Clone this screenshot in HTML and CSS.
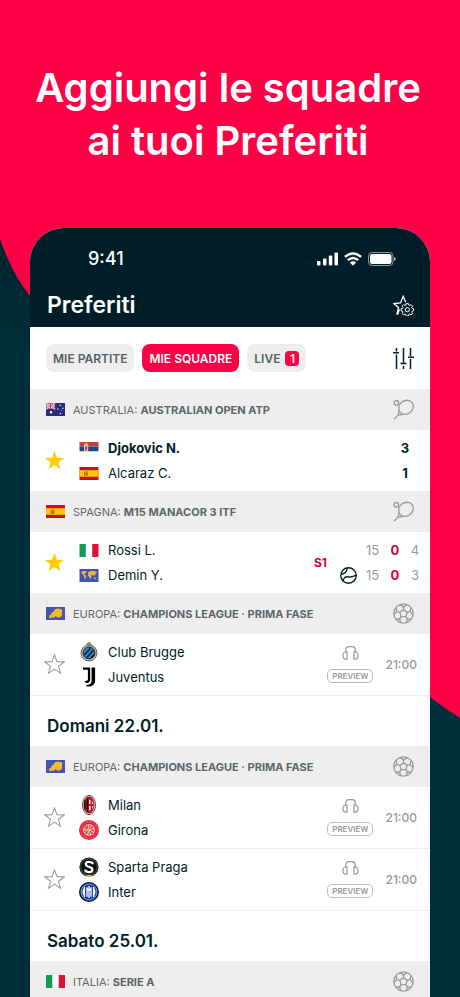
FILE: index.html
```html
<!DOCTYPE html>
<html lang="it">
<head>
  <meta charset="UTF-8">
  <meta name="viewport" content="width=device-width, initial-scale=1">
  <title>Preferiti</title>
  <link rel="stylesheet" href="styles.css">
</head>
<body>

  <!-- Icone condivise -->
  <svg class="sprite" aria-hidden="true">
    <symbol id="star" viewBox="0 0 20 20">
      <path d="M10 .8l2.3 6.5 6.9.2-5.4 4.2 1.9 6.7L10 14.4l-5.700 4 1.900-6.700L.8 7.500l6.900-.2z"/>
    </symbol>
    <symbol id="tennis" viewBox="0 0 21 21">
      <g fill="none" stroke="#999" stroke-width="1.300">
        <circle cx="3.300" cy="3.800" r="2.300"/>
        <ellipse cx="13" cy="8.300" rx="7.700" ry="6.600" transform="rotate(-38 13 8.300)"/>
        <path d="M6.300 11.300L5 16.100l4.800-.6M5 16.100L1 20.200"/>
      </g>
    </symbol>
    <symbol id="soccer" viewBox="0 0 21 21">
      <g fill="none" stroke="#999" stroke-width="1.300" stroke-linejoin="round">
        <circle cx="10.500" cy="10.500" r="9.700"/>
        <path d="M10.500 6.700l3.700 2.700-1.400 4.300H8.200L6.800 9.400z"/>
        <path d="M10.500 6.700V3.900M14.200 9.400l2.700-.9M12.800 13.700l1.700 2.300M8.200 13.700L6.500 16M6.800 9.400l-2.700-.9"/>
        <path d="M7 1.600l3.500 2.300L14 1.600M16.900 8.500L18 4.500M16.900 8.500l3.100 2.700M14.500 16l4.200.2M14.500 16l-1.500 4M6.500 16l-4.200.2M6.500 16L8 20M4.100 8.500L3 4.500M4.100 8.500L1 11.200"/>
      </g>
    </symbol>
    <symbol id="headphones" viewBox="0 0 17 14">
      <g fill="none" stroke="#999" stroke-width="1.200">
        <path d="M3.700 6.500V4.200Q3.700.7 7 .7h3q3.300 0 3.300 3.500v2.300"/>
        <path d="M5 5.800v7.400H4C2 13.200.9 11.700.9 9.600S2 6.100 4 6zM12 5.800v7.400h1c2 0 3.100-1.500 3.100-3.600S15 6.100 13 6z"/>
      </g>
    </symbol>

    <!-- Bandiere -->
    <symbol id="flag-au" viewBox="0 0 19 13">
      <path fill="#292b7c" d="M0 0h19v13H0z"/>
      <path stroke="#fff" stroke-width="1.600" d="M0 0l9 6M9 0L0 6"/>
      <path stroke="#e8475e" stroke-width=".7" d="M0 0l9 6M9 0L0 6"/>
      <path stroke="#fff" stroke-width="2" d="M4.500 0v6M0 3h9"/>
      <path stroke="#e0304b" stroke-width="1.200" d="M4.500 0v6M0 3h9"/>
      <g fill="#fff"><circle cx="5" cy="9.300" r="1.200"/><circle cx="14.300" cy="2.300" r=".7"/><circle cx="11.900" cy="6" r=".7"/><circle cx="16.800" cy="5.200" r=".7"/><circle cx="14.400" cy="10.500" r=".8"/><circle cx="15.500" cy="7.200" r=".4"/></g>
    </symbol>
    <symbol id="flag-rs" viewBox="0 0 19 13">
      <path fill="#fff" d="M0 0h19v13H0z"/>
      <path fill="#c93b45" d="M0 0h19v4.400H0z"/>
      <path fill="#1d4a86" d="M0 4.400h19v4.800H0z"/>
      <path fill="#f0d4c8" d="M4.500 2.500h4.200v5.200q0 1.800-2.100 2.600-2.100-.8-2.100-2.600z"/>
      <path fill="#d4353f" d="M5.500 4.200h2.200v3.500l-1.100 1.400-1.100-1.400z"/>
      <path fill="#edb94a" d="M5.300 1h2.600v1.700H5.300z"/>
    </symbol>
    <symbol id="flag-es" viewBox="0 0 19 13">
      <path fill="#c9101d" d="M0 0h19v13H0z"/>
      <path fill="#ffc900" d="M0 3.200h19v6.600H0z"/>
      <path fill="#bd5a1d" d="M4.600 4.600h1V9h-1zM6 5.400h2.400v2.800q-1.200 1.100-2.400 0zM6.300 4.200h1.800v.9H6.300z"/>
    </symbol>
    <symbol id="flag-it" viewBox="0 0 19 13">
      <path fill="#fff" d="M0 0h19v13H0z"/>
      <path fill="#139a50" d="M0 0h6.300v13H0z"/>
      <path fill="#dc1236" d="M12.700 0H19v13h-6.300z"/>
    </symbol>
    <symbol id="flag-world" viewBox="0 0 19 13">
      <path fill="#4252b5" d="M0 0h19v13H0z"/>
      <path fill="#e9b93b" d="M1.800 3l2-.9 3.700.3-1.200 1.500-1 .5-.3 1.300 2 1.300-.6 1.600-1 2.200-.7-2.600-.3-1.500-1.300-1.200L2 4zM8.500 3.500l1.700-1.300 3.200-.5 4 1-.4 1.500-1.200.5-.5 1.900-1-.6-.8 1-.9-1.500-.7.6.2 1.400-1.300 2.900-1.100-2.500L8.300 6.500l.4-1.200zM14.300 8.300l2 .4.200 1.500-1.900-.3z"/>
    </symbol>
    <symbol id="flag-europe" viewBox="0 0 19 13">
      <path fill="#4252b5" d="M0 0h19v13H0z"/>
      <path fill="#f3bd27" d="M3 10.700l.5-2.500 2-.8-.4-1.200 2.200-1.400 1.600-2.500 3.400-.7 4.200 1.200-.6 3 .4 1.600-1.300 2.500-2.200.3-.7 1-1.300-1.400-1.600-.5-1.500 1.800-2-.8-1 1z"/>
    </symbol>

    <!-- Stemmi -->
    <symbol id="logo-brugge" viewBox="0 0 20 20">
      <circle cx="10" cy="2.500" r="2" fill="#a89b87" stroke="#5c574f" stroke-width=".6"/>
      <circle cx="10" cy="10.900" r="8" fill="#c4b79e" stroke="#4a4a48" stroke-width=".8"/>
      <circle cx="10" cy="10.900" r="5.900" fill="#2f86d0" stroke="#151b24"/>
      <path stroke="#0c141d" stroke-width="1.400" d="M5.500 12.800l6-6.500M8 15.300l6.300-7M12 16l3.300-3.600"/>
    </symbol>
    <symbol id="logo-juventus" viewBox="0 0 20 20">
      <path d="M4 .5h7.200v12.300c0 2-1.500 3.300-4 3.500l-1.700-2.400c2.400.2 3.400-.2 3.400-1.600V2.800H4z"/>
      <path d="M12.600.5h3.500v12.700c0 4-2.700 6.300-6.700 6.300H7.700l-.6-1.600c4 .1 5.500-1.400 5.500-4.900z"/>
    </symbol>
    <symbol id="logo-milan" viewBox="0 0 20 20">
      <ellipse cx="10" cy="10" rx="6.500" ry="9.700" fill="#edd9cf" stroke="#3b1c1c" stroke-width=".8"/>
      <ellipse cx="10" cy="10" rx="5.400" ry="8.400" fill="#a81722"/>
      <path stroke="#170b0d" stroke-width="1.300" d="M6 5.500v9M8.500 3v14"/>
      <path fill="#fff" d="M10 4.500c3 .5 4.600 2.500 4.600 5.500s-1.600 5-4.600 5.500z"/>
      <path stroke="#c41c2a" stroke-width="1.800" d="M12.400 3.500v13M10 10h5"/>
    </symbol>
    <symbol id="logo-girona" viewBox="0 0 20 20">
      <circle cx="10" cy="10" r="10" fill="#e8203f"/>
      <circle cx="10" cy="10" r="8.200" fill="none" stroke="#f28a94" stroke-width=".9" stroke-dasharray="1 .9"/>
      <circle cx="10" cy="10" r="6" fill="#f6d6c6"/>
      <circle cx="10" cy="10" r="3.800" fill="none" stroke="#e25b51" stroke-width="3" stroke-dasharray="1.500 1"/>
      <path stroke="#e44654" stroke-width="1.200" d="M6 6l8 8M14 6l-8 8"/>
      <circle cx="10" cy="10" r="1.600" fill="#f5bd57"/>
    </symbol>
    <symbol id="logo-sparta" viewBox="0 0 20 20">
      <circle cx="10" cy="10" r="9.600" fill="#101010"/>
      <circle cx="10" cy="10" r="8.300" fill="none" stroke="#77736c" stroke-width=".7"/>
      <path fill="none" stroke="#fff" stroke-width="2.300" d="M13.500 7.200V6q-1-1.200-3.500-1.200-3.200 0-3.200 2.300 0 2 3.200 2.700 3.400.8 3.400 2.900 0 2.400-3.400 2.400-2.400 0-3.500-1.400v-1.300"/>
      <path fill="#2a63a5" d="M3.500 17l3.400.8v1.500q-2-.5-3.400-2.300z"/>
      <path fill="#efbd36" d="M7.500 18h5v1.700h-5z"/>
      <path fill="#cf3338" d="M13.100 17.800l3.400-.8q-1.400 1.800-3.400 2.300z"/>
    </symbol>
    <symbol id="logo-inter" viewBox="0 0 20 20">
      <circle cx="10" cy="10" r="10" fill="#05183a"/>
      <circle cx="10" cy="10" r="8" fill="#173fc4" stroke="#dce7fa" stroke-width=".6"/>
      <path fill="none" stroke="#fff" stroke-width="1.300" d="M5.400 5v10M8 5.200v9.500M12 5.200v9.500M14.600 5v10M10 4v12M8 6l2 3 2-3M5.400 6.500q-2.500 3.500 0 7M14.600 6.500q2.500 3.500 0 7"/>
    </symbol>
  </svg>

  <!-- Sfondo -->
  <svg class="backdrop" viewBox="0 0 460 997" preserveAspectRatio="none" aria-hidden="true">
    <path fill="#ff0046" d="M0 0h460v718q-15-9-30-21L30 296Q12 274 0 239z"/>
  </svg>

  <h1 class="headline">Aggiungi le squadre<br>ai tuoi Preferiti</h1>

  <main class="phone">
    <header class="phone-header">
      <div class="status-bar">
        <span class="clock">9:41</span>
        <svg class="signal" width="22" height="14" viewBox="0 0 22 14" fill="#fff">
          <rect x="0" y="9" width="3.500" height="4.500" rx="1"/>
          <rect x="6" y="6.500" width="3.500" height="7" rx="1"/>
          <rect x="11.800" y="3.500" width="3.500" height="10" rx="1"/>
          <rect x="17.500" y="0.500" width="3.500" height="13" rx="1"/>
        </svg>
        <svg class="wifi" width="18" height="14" viewBox="0 0 18 14" fill="none" stroke="#fff" stroke-width="2.400">
          <path d="M.9 4.900q8.100-7 16.200 0M3.800 8.200q5.200-4.400 10.400 0"/>
          <path fill="#fff" stroke="none" d="M5.900 10.500q3.100-2.300 6.200 0L9 13.700z"/>
        </svg>
        <svg class="battery" width="28" height="14" viewBox="0 0 28 14">
          <rect x=".5" y=".5" width="24.500" height="13" rx="3.500" fill="none" stroke="#8b989c"/>
          <rect x="2" y="2" width="21.500" height="10" rx="2" fill="#fff"/>
          <path d="M26 5q1.700.5 1.700 2T26 9z" fill="#b3bcbe"/>
        </svg>
      </div>
      <div class="title-bar">
        <h2>Preferiti</h2>
        <button class="icon-button" aria-label="Gestisci preferiti">
          <svg width="21" height="21" viewBox="0 0 21 21" fill="none" stroke="#fff" stroke-width="1.300">
            <path d="M6.700 14.500L3.900 19.500 5.500 12.500.8 8.500l6.700-.6L10.200 1.300l2.500 6"/>
            <path d="M5.700 17.800l-1.800 1.700"/>
            <path stroke-width="1" d="M13.200 8.600h2.200l.3 1.400 1 .4 1.300-.8 1.500 1.500-.8 1.300.4 1 1.400.3v2.200l-1.400.3-.4 1 .8 1.300-1.500 1.400-1.300-.8-1 .4-.3 1.400h-2.200l-.3-1.400-1-.4-1.300.8-1.500-1.400.8-1.300-.4-1-1.400-.3v-2.200l1.400-.3.4-1-.8-1.300 1.500-1.500 1.300.8 1-.4z"/>
            <circle cx="14.300" cy="14.700" r="2.100" stroke-width="1"/>
          </svg>
        </button>
      </div>
    </header>

    <nav class="tabs">
      <button class="tab">MIE PARTITE</button>
      <button class="tab active">MIE SQUADRE</button>
      <button class="tab">LIVE <span class="badge">1</span></button>
      <button class="icon-button filter" aria-label="Filtri">
        <svg width="21" height="21" viewBox="0 0 21 21" fill="none" stroke="#001e28" stroke-width="1.500">
          <path d="M3.500 0v3.500M3.500 6.500V21M0 4.700h6M10.500 0v15M10.500 18v3M7.500 15.500h6M17.500 0v8M17.500 11v10M15 9.300h6"/>
        </svg>
      </button>
    </nav>

    <section>
      <h3 class="league">
        <svg class="flag"><use href="#flag-au"/></svg>
        <span>AUSTRALIA: <b>AUSTRALIAN OPEN ATP</b></span>
        <svg class="sport"><use href="#tennis"/></svg>
      </h3>
      <div class="match">
        <button class="star on" aria-label="Rimuovi dai preferiti"><svg><use href="#star"/></svg></button>
        <div class="teams">
          <div class="team winner"><svg class="flag"><use href="#flag-rs"/></svg>Djokovic N.</div>
          <div class="team"><svg class="flag"><use href="#flag-es"/></svg>Alcaraz C.</div>
        </div>
        <div class="result"><span>3</span><span>1</span></div>
      </div>
    </section>

    <section>
      <h3 class="league">
        <svg class="flag"><use href="#flag-es"/></svg>
        <span>SPAGNA: <b>M15 MANACOR 3 ITF</b></span>
        <svg class="sport"><use href="#tennis"/></svg>
      </h3>
      <div class="match">
        <button class="star on" aria-label="Rimuovi dai preferiti"><svg><use href="#star"/></svg></button>
        <div class="teams">
          <div class="team"><svg class="flag"><use href="#flag-it"/></svg>Rossi L.</div>
          <div class="team"><svg class="flag"><use href="#flag-world"/></svg>Demin Y.</div>
        </div>
        <span class="stage">S1</span>
        <div class="sets">
          <span></span><span>15</span><span class="live">0</span><span>4</span>
          <svg width="17" height="17" viewBox="0 0 17 17" fill="none" stroke="#001e28" stroke-width="1.400">
            <circle cx="8.500" cy="8.500" r="7.700"/>
            <path d="M1.200 6.900C4.500 7.300 7 5 7.200 1M3.200 14C3.400 10.800 5.500 9.300 8.500 9.900s4.500-.3 7.600-1.700"/>
          </svg>
          <span>15</span><span class="live">0</span><span>3</span>
        </div>
      </div>
    </section>

    <section>
      <h3 class="league">
        <svg class="flag"><use href="#flag-europe"/></svg>
        <span>EUROPA: <b>CHAMPIONS LEAGUE · PRIMA FASE</b></span>
        <svg class="sport"><use href="#soccer"/></svg>
      </h3>
      <div class="match upcoming">
        <button class="star" aria-label="Aggiungi ai preferiti"><svg><use href="#star"/></svg></button>
        <div class="teams">
          <div class="team"><svg class="logo"><use href="#logo-brugge"/></svg>Club Brugge</div>
          <div class="team"><svg class="logo"><use href="#logo-juventus"/></svg>Juventus</div>
        </div>
        <div class="extras">
          <svg class="audio"><use href="#headphones"/></svg>
          <span class="preview">PREVIEW</span>
        </div>
        <time>21:00</time>
      </div>
    </section>

    <h2 class="day">Domani 22.01.</h2>
    <section>
      <h3 class="league">
        <svg class="flag"><use href="#flag-europe"/></svg>
        <span>EUROPA: <b>CHAMPIONS LEAGUE · PRIMA FASE</b></span>
        <svg class="sport"><use href="#soccer"/></svg>
      </h3>
      <div class="match upcoming">
        <button class="star" aria-label="Aggiungi ai preferiti"><svg><use href="#star"/></svg></button>
        <div class="teams">
          <div class="team"><svg class="logo"><use href="#logo-milan"/></svg>Milan</div>
          <div class="team"><svg class="logo"><use href="#logo-girona"/></svg>Girona</div>
        </div>
        <div class="extras">
          <svg class="audio"><use href="#headphones"/></svg>
          <span class="preview">PREVIEW</span>
        </div>
        <time>21:00</time>
      </div>
      <div class="match upcoming">
        <button class="star" aria-label="Aggiungi ai preferiti"><svg><use href="#star"/></svg></button>
        <div class="teams">
          <div class="team"><svg class="logo"><use href="#logo-sparta"/></svg>Sparta Praga</div>
          <div class="team"><svg class="logo"><use href="#logo-inter"/></svg>Inter</div>
        </div>
        <div class="extras">
          <svg class="audio"><use href="#headphones"/></svg>
          <span class="preview">PREVIEW</span>
        </div>
        <time>21:00</time>
      </div>
    </section>

    <h2 class="day">Sabato 25.01.</h2>
    <section>
      <h3 class="league">
        <svg class="flag"><use href="#flag-it"/></svg>
        <span>ITALIA: <b>SERIE A</b></span>
        <svg class="sport"><use href="#soccer"/></svg>
      </h3>
    </section>
  </main>

</body>
</html>
```

FILE: styles.css
```css
* {
  box-sizing: border-box;
}

body {
  margin: 0;
  height: 100vh;
  overflow: hidden;
  position: relative;
  background: linear-gradient(#002029 20%, #002f3c 36%);
  font-family: Inter, "Liberation Sans", sans-serif;
  color: #001e28;
}

h1, h2, h3 {
  margin: 0;
}

button {
  border: none;
  padding: 0;
  font-family: inherit;
  cursor: pointer;
}

svg {
  display: block;
  flex: none;
}

.sprite {
  position: absolute;
  width: 0;
  height: 0;
}

.backdrop {
  position: absolute;
  top: 0;
  left: 0;
  width: 100%;
  height: 100%;
  z-index: -1;
}

.headline {
  padding: 61px 4px 61px 0;
  color: #fff;
  font-size: 40px;
  font-weight: 600;
  line-height: 53px;
  text-align: center;
  white-space: nowrap;
}

/* Telefono */
.phone {
  margin: 0 30px;
  background: #fff;
  border-radius: 34px 34px 0 0;
  overflow: hidden;
}

.phone-header {
  background: #001e28;
  color: #fff;
}

.status-bar {
  display: flex;
  align-items: center;
  padding: 20px 34px 0 58px;
}

.clock {
  flex: 1;
  font-size: 18px;
  font-weight: 500;
  line-height: 22px;
}

.wifi {
  margin: 0 6px 0 5px;
}

.title-bar {
  display: flex;
  align-items: center;
  justify-content: space-between;
  padding: 20px 16px 7px 17px;
}

.title-bar h2 {
  font-size: 23px;
  font-weight: 600;
  line-height: 30px;
}

.icon-button {
  background: none;
}

/* Schede */
.tabs {
  display: flex;
  align-items: center;
  gap: 8px;
  padding: 17px 16px;
}

.tab {
  display: flex;
  align-items: center;
  gap: 5px;
  height: 28px;
  padding: 0 7px;
  border-radius: 8px;
  background: #eee;
  color: #555e61;
  font-size: 12px;
  font-weight: 600;
}

.tab.active {
  background: #ff0046;
  color: #fff;
}

.badge {
  width: 14px;
  border-radius: 4px;
  background: #ff0046;
  color: #fff;
  line-height: 15px;
}

.filter {
  margin-left: auto;
}

/* Campionato */
.league {
  display: flex;
  align-items: center;
  gap: 8px;
  height: 41px;
  padding: 0 16px;
  background: #eee;
  color: #666;
  font-size: 11px;
  font-weight: 400;
}

.league b {
  font-weight: 700;
  color: #5c6568;
}

.flag {
  width: 19px;
  height: 13px;
}

.sport {
  width: 21px;
  height: 21px;
  margin-left: auto;
}

/* Partita */
.match {
  display: flex;
  align-items: center;
  height: 61px;
  padding-left: 14px;
}

.upcoming {
  height: 62px;
  border-bottom: 1px solid #eee;
  padding-right: 13px;
}

.star {
  width: 21px;
  height: 21px;
  background: none;
}

.star svg {
  width: 21px;
  height: 21px;
  fill: none;
  stroke: #999;
}

.star.on svg {
  fill: #ffcd00;
  stroke: none;
}

.teams {
  flex: 1;
  padding-left: 14px;
}

.team {
  display: flex;
  align-items: center;
  gap: 9px;
  font-size: 13px;
  line-height: 25px;
}

.team .flag {
  width: 20px;
}

.winner {
  font-weight: 700;
}

.logo {
  width: 20px;
  height: 20px;
}

.result {
  display: grid;
  width: 20px;
  margin-right: 15px;
  font-size: 13px;
  font-weight: 700;
  line-height: 25px;
  text-align: center;
}

.stage {
  margin-right: 13px;
  color: #d9003f;
  font-size: 12px;
  font-weight: 700;
}

.sets {
  display: grid;
  grid-template-columns: 20px 25px 20px 20px;
  align-items: center;
  margin-right: 5px;
  color: #999;
  font-size: 13px;
  line-height: 25px;
  text-align: center;
}

.sets .live {
  color: #d9003f;
  font-weight: 700;
}

.extras {
  display: flex;
  flex-direction: column;
  align-items: center;
  gap: 9px;
  margin-right: 12px;
}

.audio {
  width: 17px;
  height: 14px;
}

.preview {
  padding: 0 4px;
  border: 1px solid #bbb;
  border-radius: 5px;
  color: #999;
  font-size: 8px;
  font-weight: 600;
  line-height: 12px;
}

.upcoming time {
  color: #999;
  font-size: 12px;
  font-weight: 500;
}

.day {
  padding: 18px 17px 8px;
  font-size: 17px;
  font-weight: 600;
  line-height: 24px;
}
```
